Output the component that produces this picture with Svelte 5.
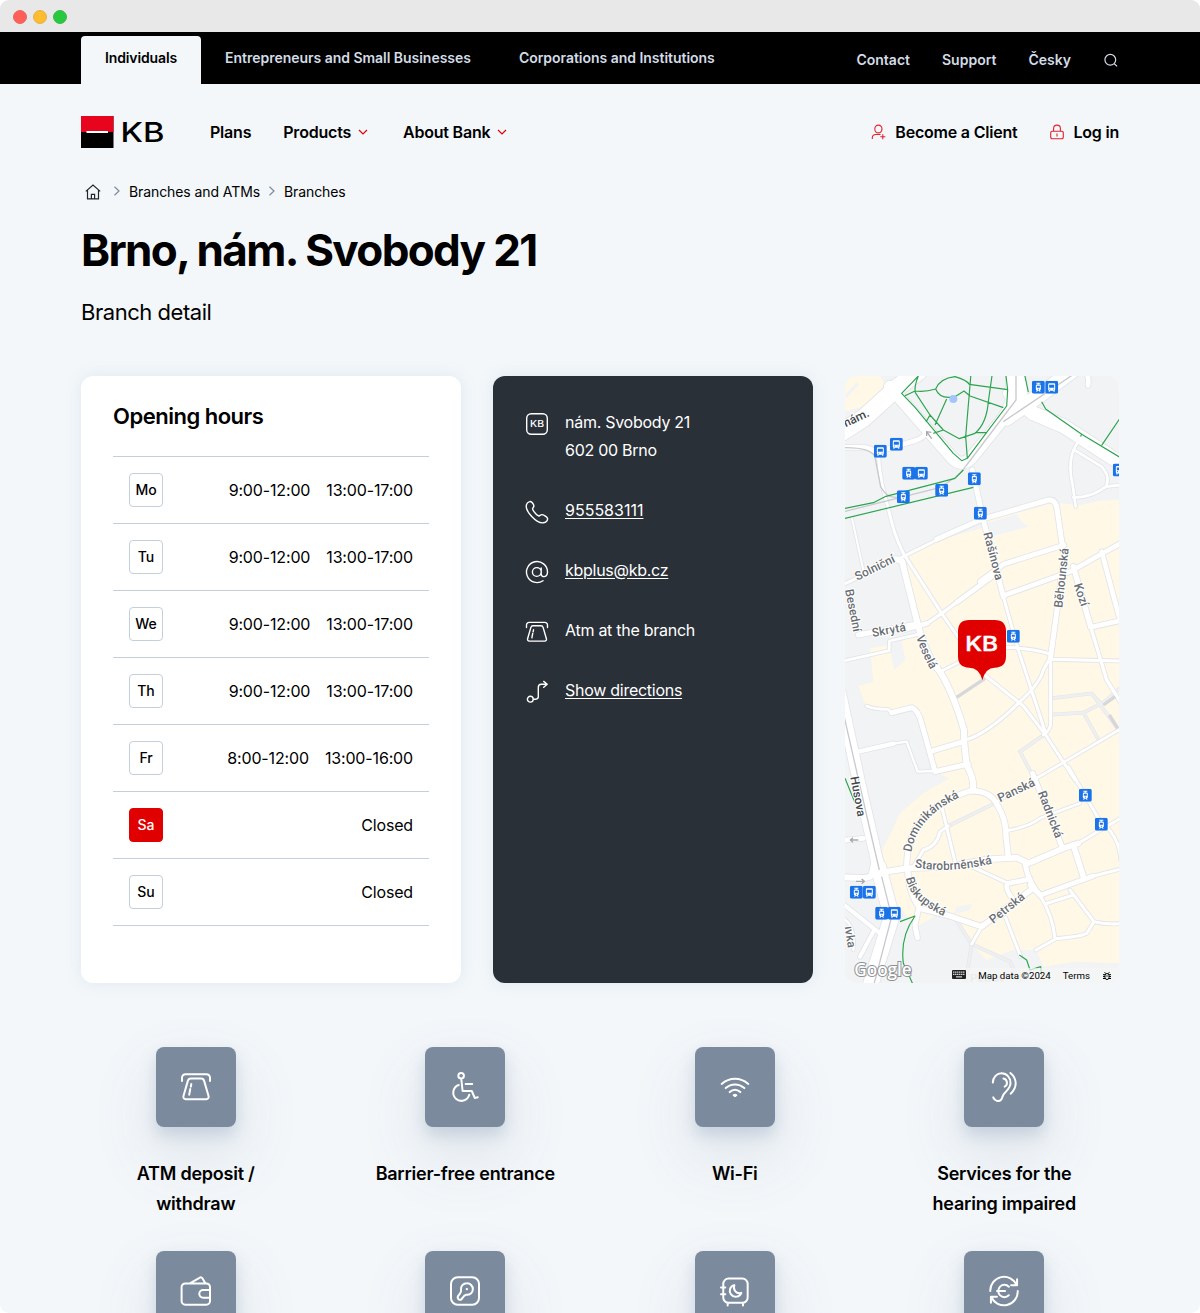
<script>
  const audiences = ['Individuals', 'Entrepreneurs and Small Businesses', 'Corporations and Institutions'];
  const hours = [
    { day: 'Mo', slots: ['9:00-12:00', '13:00-17:00'] },
    { day: 'Tu', slots: ['9:00-12:00', '13:00-17:00'] },
    { day: 'We', slots: ['9:00-12:00', '13:00-17:00'] },
    { day: 'Th', slots: ['9:00-12:00', '13:00-17:00'] },
    { day: 'Fr', slots: ['8:00-12:00', '13:00-16:00'] },
    { day: 'Sa', slots: ['Closed'], today: true },
    { day: 'Su', slots: ['Closed'] }
  ];
  const services = [
    { icon: 'atm', label: 'ATM deposit / withdraw' },
    { icon: 'wheelchair', label: 'Barrier-free entrance' },
    { icon: 'wifi', label: 'Wi-Fi' },
    { icon: 'ear', label: 'Services for the hearing impaired' },
    { icon: 'wallet', label: 'Cash desk' },
    { icon: 'key', label: 'Safe deposit boxes' },
    { icon: 'vault', label: 'Night safe' },
    { icon: 'euro', label: 'Exchange office' }
  ];

  // Line icons on a 24-unit grid
  const icons = {
    phone: 'M4.6 1.6c1.5-.6 2.9 1 4 3.2.8 1.7-.2 2.6-.8 3.3-.7.8-.1 1.8 1.2 3.600s3.500 4 4.800 4.300c1.300.2 1.600-1.400 3-1.400 1.600 0 5 2.100 5.600 3.500.8 2.200-1.400 4.400-4.200 4.700-3.300.3-8-2.600-11.700-6.600C2.700 12.200.8 7.600 1.400 4.800c.3-1.600 1.500-2.700 3.200-3.200z',
    at: 'M16.200 8v6c0 4 6.300 3.500 6.300-2A10.500 10.500 0 1 0 18 20.700M16.200 12a4.400 4.400 0 1 1-8.800 0 4.400 4.400 0 0 1 8.800 0z',
    atm: 'M1.500 7.500V5A2.600 2.600 0 0 1 4.100 2.400h15.800A2.600 2.600 0 0 1 22.500 5v2.500M8 5.700h8c1.200 0 1.800.6 2.100 1.700l3.300 11.300c.4 1.400-.4 2.400-1.700 2.400H4.300c-1.300 0-2.100-1-1.700-2.400L5.900 7.400C6.200 6.300 6.800 5.700 8 5.700zM8.500 9.800l-.4 2M7.700 13.500l-.8 4.300',
    route: 'M8.200 19.200a2.900 2.900 0 1 1-5.800 0 2.900 2.900 0 0 1 5.800 0zM8.200 19.200h2.500c1.700 0 2.600-1 2.600-2.600V7.400c0-2 1-3.100 3-3.100h5.900M18.700 1.400l3.500 2.900-3.500 2.900',
    wheelchair: 'M11.200 3.600a2.100 2.100 0 1 1-4.200 0 2.100 2.100 0 0 1 4.200 0zM9.200 5.800l1 9.200h6.900l2.200 5.200 2.300-.5M12.500 9.800h4.900M7.300 10.500a6.100 6.100 0 1 0 7.900 7.300',
    wifi: 'M2 9.700c5.900-5.300 14.100-5.300 20 0M5 12.800c4.200-3.600 9.800-3.600 14 0M8 15.800c2.500-2.200 5.500-2.200 8 0M11 18.200c.6-.5 1.400-.5 2 0l-1 .6z',
    ear: 'M3.600 8.700C3.800 4.600 6.600 1.700 10.200 1.700c3.900 0 6.700 3.400 6.700 7.300 0 3.800-2.900 5.600-5.100 8.300-.9 1.200-.9 3-2 4.300-1.600 1.700-4.900 1-5.900-1.800M11.600 5.700c3.200.7 3.400 4.900.9 6M16.800 1.500c5.300 4.400 5.200 11 .2 15.500',
    wallet: 'M4 6.300h15.800a2.700 2.700 0 0 1 2.700 2.700v10.500a2.800 2.800 0 0 1-2.800 2.800H4a2.800 2.800 0 0 1-2.800-2.800V9A2.700 2.700 0 0 1 4 6.300zM7.400 6.200l7.200-4.100c1-.6 1.700-.4 2.300.6l2.100 3.500M22.500 11.300h-5.200a2.850 2.850 0 0 0 0 5.700h5.200',
    key: 'M6.500 1.700h11a5 5 0 0 1 5 5v10.600a5 5 0 0 1-5 5h-11a5 5 0 0 1-5-5V6.700a5 5 0 0 1 5-5zM9 11.300C8.600 8.300 10.700 6.200 13.400 6.200a4.400 4.400 0 0 1 4.500 4.500c0 2.500-2.300 4.500-5 4.100-1.300.2-1.900 1-2.500 2l-.9 1.300c-1.600 1.300-3.700-.5-2.700-2.300l1.500-2c.6-.7.8-1.500.7-2.500zM13.300 10.500h.2v.2h-.2z',
    vault: 'M7.200 2.700h10.300a4 4 0 0 1 4 4v10.200a4 4 0 0 1-4 4H7.200a4 4 0 0 1-4-4V6.700a4 4 0 0 1 4-4zM1.500 9.300h3.200M1.500 14.500h3.200M6.500 21v1.900M18 21v1.900M11.500 7.600c-1.300 3.600 1.600 6.900 5.200 5.800-1.100 3.200-5.700 3.900-7.700 1.200-1.900-2.600-.8-6.200 2.500-7z',
    euro: 'M1.700 12A10.300 10.300 0 0 1 21.500 7.700M22.300 12A10.300 10.300 0 0 1 2.500 16.400M21.800 3.200v4.500h-4.500M2.200 20.900v-4.500h4.500M15.600 8.800a4.600 4.600 0 1 0 0 6.400M6.800 12h6'
  };

  const contacts = [
    { icon: 'kb', text: ['nám. Svobody 21', '602 00 Brno'] },
    { icon: 'phone', text: ['955583111'], link: true, digits: true },
    { icon: 'at', text: ['kbplus@kb.cz'], link: true },
    { icon: 'atm', text: ['Atm at the branch'] },
    { icon: 'route', text: ['Show directions'], link: true }
  ];

  // Streets of the map, in map units (three per pixel): [width, path]
  const streets = [
    [52, 'M0 190L70 145L175 50L235 5'],
    [36, 'M150 50L335 262Q362 292 392 266L490 145Q515 105 516 80V0'],
    [44, 'M500 145L600 75L700 0'],
    [42, 'M510 70L580 130L670 168L850 285'],
    [14, 'M738 10Q748 20 744 46'],
    [30, 'M540 10L550 100'],
    [8, 'M710 222Q680 270 698 345L707 410M703 240L785 290Q812 320 798 350Q750 385 700 382M798 350L840 345'],
    [14, 'M0 232H60Q90 232 100 242M140 237L225 212Q250 205 262 185'],
    [9, 'M115 250Q120 340 145 415Q160 490 190 550L305 730L360 810'],
    [6, 'M36 445L72 610'],
    [9, 'M0 648L190 560L290 510'],
    [15, 'M290 508L425 448L625 390Q645 388 650 410L672 560L655 690L632 860'],
    [9, 'M632 860V1060Q632 1080 610 1095'],
    [15, 'M397 300L430 450L490 680'],
    [9, 'M490 680L535 840L617 1090'],
    [14, 'M420 635L490 583L672 525'],
    [14, 'M490 677L690 605L850 515'],
    [16, 'M700 590L752 770'],
    [10, 'M752 770Q785 880 800 930L850 1010'],
    [14, 'M785 545L837 740M752 772L840 752'],
    [14, 'M350 697L460 617M262 760L190 780'],
    [10, 'M262 760L305 730L350 697'],
    [18, 'M165 568Q190 568 190 590L235 770Q260 860 300 905Q340 970 372 1080V1110L380 1185Q405 1230 398 1262'],
    [15, 'M55 795L230 762'],
    [8, 'M0 875L148 842V813L235 793M305 903L360 875'],
    [9, 'M495 832Q580 835 630 852M632 868L850 873'],
    [9, 'M430 912L550 1008L617 1095L705 1230'],
    [9, 'M370 1112Q440 1095 540 995Q600 940 610 900L632 860'],
    [8, 'M80 1008Q100 1018 145 1018L155 1030'],
    [15, 'M155 1028L215 1013Q235 1020 245 1060L270 1150L285 1205L385 1182'],
    [15, 'M270 1145L370 1115'],
    [13, 'M45 1147L160 1121'],
    [7, 'M160 1121L200 1115L233 1205L280 1203'],
    [36, 'M0 970L60 1250L120 1510'],
    [46, 'M115 1490L155 1640L90 1850'],
    [14, 'M0 1412L70 1405'],
    [18, 'M0 1520Q90 1530 95 1515L105 1470'],
    [12, 'M0 1595L120 1690M60 1760L100 1685'],
    [7, 'M0 1640Q50 1660 40 1740'],
    [16, 'M200 1495Q200 1400 245 1350Q300 1290 390 1263Q450 1260 472 1305Q500 1350 498 1400L505 1460'],
    [17, 'M110 1510L200 1495L330 1490L440 1468L530 1463L565 1480L670 1435L715 1420'],
    [9, 'M715 1420Q780 1380 850 1340'],
    [15, 'M578 1210L668 1435'],
    [8, 'M850 1072L560 1242L470 1295M500 1382Q570 1370 600 1345L720 1300'],
    [9, 'M685 1190L775 1345Q840 1400 842 1470'],
    [17, 'M700 1425L730 1520'],
    [14, 'M600 1576L760 1518'],
    [9, 'M760 1518L850 1495M305 1310L345 1475M220 1490L250 1440Q290 1430 300 1385L325 1368M395 1490L505 1540'],
    [15, 'M555 1480Q565 1540 602 1577L570 1545'],
    [14, 'M570 1527L505 1540Q490 1550 520 1590'],
    [16, 'M203 1495Q205 1570 240 1615L330 1638L425 1670L575 1558'],
    [15, 'M235 1620L225 1665L232 1703'],
    [9, 'M600 1576Q640 1640 645 1708L588 1740M645 1706Q720 1700 740 1690L762 1655L690 1560M762 1655Q800 1665 850 1660M615 1602L700 1575M425 1670L395 1722M497 1643L542 1760']
  ];
  const passages = 'M632 985L755 970L785 1003L850 945M632 1034L730 1028L775 1108M755 970L835 1078M730 1028L825 980M615 1092L540 1145L580 1220M325 1368L470 1297M345 1645L395 1722L375 1850M395 1722L510 1775L545 1850';
  const rail = 'M528 10V90L380 285Q355 325 290 355L0 428M705 10L490 155M0 233Q95 230 105 262L122 350Q140 385 170 382M0 985L90 1380L118 1500M125 1520L155 1640L100 1850';
  const paths = 'M235 18L185 70L225 112L340 250L365 272L382 265L440 187L500 108L503 60L498 18M235 18Q222 50 226 68L270 135L310 180L358 206L405 190Q440 160 445 95L457 10M195 77L225 63Q255 67 287 57Q300 25 345 20Q380 30 388 43L503 59M287 57Q300 90 345 80L372 63L390 78L490 113M393 10L377 200L382 265M320 87L285 165M405 188H440M280 190L310 180M258 156L270 135M553 10L565 66M605 95L617 117L650 140L725 193L850 268M785 226L850 130M725 190L722 200M0 418L100 398L135 380L345 325L370 300M0 449L400 352M15 1225L45 1298M180 1655L225 1638Q180 1700 190 1780L222 1850M538 1755L560 1770L570 1800L602 1790L605 1815';

  const stops = [
    ['tram', 595, 52], ['bus', 635, 52], ['bus', 121, 244], ['bus', 169, 223], ['tram', 206, 310], ['bus', 244, 310],
    ['tram', 190, 380], ['tram', 305, 361], ['tram', 403, 326], ['tram', 421, 430], ['bus', 838, 300], ['tram', 520, 799],
    ['tram', 736, 1276], ['tram', 784, 1363], ['tram', 49, 1567], ['bus', 88, 1567], ['tram', 125, 1630], ['bus', 163, 1630]
  ];
  // Street names, each set along its own baseline
  const names = [
    ['nám.', 'M17 172L110 128', 'dark'],
    ['Rašínova', 'M430 490L490 720'],
    ['Solniční', 'M52 632L190 564'],
    ['Besední', 'M15 660L49 830'],
    ['Skrytá', 'M98 801L230 777'],
    ['Veselá', 'M229 800Q242 850 290 930'],
    ['Běhounská', 'M667 714L692 480'],
    ['Kozí', 'M701 645L735 745'],
    ['Husova', 'M31 1222L64 1400', 'dark'],
    ['Dominikánská', 'M214 1447Q230 1340 364 1280'],
    ['Panská', 'M480 1297L620 1230'],
    ['Radnická', 'M593 1268L665 1452'],
    ['Starobrněnská', 'M224 1492Q340 1515 500 1470'],
    ['Biskupská', 'M198 1525Q210 1600 340 1650'],
    ['Petrská', 'M460 1662L600 1550'],
    ['ıvka', 'M14 1670L30 1780']
  ];
</script>

{#snippet glyph(name)}
  <svg class="glyph" viewBox="0 0 24 24" aria-hidden="true">
    {#if name === 'kb'}
      <rect x="1.700" y="1.700" width="20.600" height="20.600" rx="4.500" />
      <text class="glyph-text" x="5" y="15" textLength="14" lengthAdjust="spacingAndGlyphs">KB</text>
    {:else}
      <path d={icons[name]} />
    {/if}
  </svg>
{/snippet}

{#snippet chevron()}
  <svg class="chevron" viewBox="0 0 10 10"><path d="M1 3l4 4 4-4" /></svg>
{/snippet}

{#snippet crumb()}
  <svg class="crumb-sep" viewBox="0 0 8 10"><path d="M1.500 .8L6 5l-4.500 4.200" /></svg>
{/snippet}

<div class="window">
  <div class="titlebar"><i class="dot red"></i><i class="dot yellow"></i><i class="dot green"></i></div>

  <div class="topbar">
    <nav class="audiences">
      {#each audiences as a, i}
        <a class:active={i === 0}>{a}</a>
      {/each}
    </nav>
    <nav class="utility">
      <a>Contact</a><a>Support</a><a>Česky</a>
      <svg class="search" viewBox="0 0 16 16"><circle cx="7.300" cy="7.800" r="5.400" /><path d="M11.300 11.800l2.800 2.600" /></svg>
    </nav>
  </div>

  <header class="header">
    <svg class="logo" viewBox="0 0 84 32">
      <rect width="32.500" height="32" fill="#000" /><rect width="32.500" height="16" fill="#e9041e" />
      <rect x="5.500" y="15" width="21.500" height="2" fill="#fff" />
      <text class="logo-text" x="39.500" y="26" textLength="44" lengthAdjust="spacingAndGlyphs">KB</text>
    </svg>
    <nav class="menu">
      <a>Plans</a>
      <a>Products {@render chevron()}</a>
      <a>About Bank {@render chevron()}</a>
    </nav>
    <nav class="account">
      <a>
        <svg class="red-icon" viewBox="0 0 16 16"><path d="M11 5A3.600 3.900 0 1 1 3.800 5 3.600 3.900 0 0 1 11 5zM1.300 15v-1.200c0-2.200 1.600-3.300 3.700-3.300M5 10.500h4.500M11.800 10.300v5M9.300 12.800h5" /></svg>
        Become a Client
      </a>
      <a>
        <svg class="red-icon" viewBox="0 0 16 16"><path d="M3.200 7.300h9.600a1.500 1.500 0 0 1 1.500 1.500v4.400a1.500 1.500 0 0 1-1.500 1.500H3.200a1.500 1.500 0 0 1-1.500-1.500V8.800a1.500 1.500 0 0 1 1.500-1.500zM4.600 7V4.500a3.400 3.400 0 0 1 6.800 0V7M8 9.500v3" /></svg>
        Log in
      </a>
    </nav>
  </header>

  <nav class="breadcrumbs">
    <svg class="home" viewBox="0 0 16 16"><path d="M.8 7.400L8 1l7.200 6.400M2.500 6v8.800h11V6M6.400 14.600v-4.300h3.200v4.300" /></svg>
    {@render crumb()}<a>Branches and ATMs</a>
    {@render crumb()}<a>Branches</a>
  </nav>

  <h1>Brno, nám. Svobody 21</h1>
  <p class="subtitle">Branch detail</p>

  <main class="cards">
    <section class="hours">
      <h2>Opening hours</h2>
      <ul>
        {#each hours as h}
          <li>
            <b class="day" class:today={h.today}>{h.day}</b>
            <span class="slots">{#each h.slots as s}<span>{s}</span>{/each}</span>
          </li>
        {/each}
      </ul>
    </section>

    <section class="contact">
      {#each contacts as c}
        <div class="contact-row">
          {@render glyph(c.icon)}
          <div class="contact-text" class:link={c.link} class:digits={c.digits}>
            {#each c.text as line}<div><span>{line}</span></div>{/each}
          </div>
        </div>
      {/each}
    </section>

    <section class="map">
      <svg class="map-art" viewBox="15 18 822 1821">
        <defs>
          <symbol id="tram" viewBox="0 0 13 13">
            <rect width="13" height="13" rx="2" fill="#1a73e8" />
            <path d="M4.500 2h4v.9H7l-.3.800h.8c1 0 1.500.5 1.500 1.400v3.400c0 .7-.4 1.100-1 1.200l.8 1.300H7.700L7.200 10H5.800l-.5 1H4.200L5 9.700c-.6-.1-1-.5-1-1.200V5.100c0-.9.5-1.400 1.500-1.400h.3l.3-.8H4.500zM5 5v2h3V5zM6 8v.8h1V8z" fill="#fff" fill-rule="evenodd" />
          </symbol>
          <symbol id="bus" viewBox="0 0 13 13">
            <rect width="13" height="13" rx="2" fill="#1a73e8" />
            <path d="M4.500 2.500h4c1 0 1.500.5 1.500 1.400v5l-.5.600V11H8.300v-1H4.700v1H3.500V9.500L3 8.900v-5c0-.9.5-1.400 1.500-1.400zM4 4v2.800h5V4zM4.200 7.800v.9h1v-.9zM7.800 7.800v.9h1v-.9z" fill="#fff" fill-rule="evenodd" />
          </symbol>
        </defs>
        <path class="quarter" d="M0 0H110L140 55L100 100L0 130zM450 480L440 450L530 430L640 398L720 405L780 392L850 388V1780L705 1775L610 1790L590 1740H520L440 1770L395 1722L345 1645L300 1630L230 1670L150 1580L125 1440L150 1395L180 1330L250 1270L328 1225L285 1205L240 1040L215 1012L150 1030L75 1000L55 948L100 935L90 835L148 825L163 900L196 870L185 815L232 790L195 640L205 560L290 512L440 470z" />
        <path class="block" d="M15 75L50 35L55 45L20 85zM530 432L545 455L565 470L460 498L440 460zM350 1610L395 1602L390 1620L340 1632z" />
        <path class="passage-edge" d={passages} /><path class="passage" d={passages} />
        {#each streets as [w, d]}<path class="street-edge" {d} stroke-width={w + 5} />{/each}
        {#each streets as [w, d]}<path class="street" {d} stroke-width={w} />{/each}
        <path class="closed" d="M350 982L435 925M790 1005L825 980M808 1035L833 1075" />
        <path class="rail" d={rail} />
        <path class="path" d={paths} />
        <circle cx="340" cy="87" r="12" fill="#a2c5fb" />
        <path class="oneway" d="M275 206L262 188M260 198V185L274 187M55 1410H32M39 1403l-8 7 8 7M48 1534H72M65 1527l8 7-8 7" />
        <text class="district" x="390" y="1835">Petrov</text>
        {#each names as [label, d, tone], i}
          <path id={'way' + i} {d} fill="none" />
          <text class="street-name" class:dark={tone}><textPath href={'#way' + i}>{label}</textPath></text>
        {/each}
        {#each stops as [kind, x, y]}
          <use href={'#' + kind} x={x - 19.500} y={y - 19.500} width="39" height="39" />
        {/each}
        <path d="M388 750H464Q498 750 498 784V859Q498 893 464 893Q437 893 427 930Q417 893 388 893Q354 893 354 859V784Q354 750 388 750z" fill="#e10000" />
        <text class="pin-text" x="376" y="844" textLength="98" lengthAdjust="spacingAndGlyphs">KB</text>
        <text class="google" x="43" y="1817" textLength="172" lengthAdjust="spacingAndGlyphs">Google</text>
      </svg>
      <div class="attribution">
        <svg class="keyboard" viewBox="0 0 14 9"><rect width="14" height="9" rx="1" fill="#222" /><path d="M1.200 2.200h12M1.200 4.400h12" stroke="#fff" stroke-width="1.200" stroke-dasharray="1.200 .8" /><path d="M4 6.900h6" stroke="#fff" /></svg>
        <span>Map data ©2024</span><span>Terms</span>
        <svg class="bug" viewBox="0 0 10 10"><rect x="3" y="2.500" width="4" height="6" rx="2" /><path d="M3.500 2.500L2.700 1.200M6.500 2.500l.8-1.300M1 3.700h2M7 3.700h2M1 5.600h2M7 5.600h2M1 7.500h2M7 7.500h2M4.300 5h1.400" /></svg>
      </div>
    </section>
  </main>

  <section class="services">
    {#each services as s}
      <div class="service">
        <div class="tile">{@render glyph(s.icon)}</div>
        <h3>{s.label}</h3>
      </div>
    {/each}
  </section>
</div>

<style>
  :global(body) { background: #fff; }
  * { box-sizing: border-box; }
  .window { height: 1313px; overflow: hidden; border-radius: 9px; background: #f3f7fa; color: #000; font-family: Inter, sans-serif; }
  h1, h2, h3, p, ul { margin: 0; padding: 0; }
  svg { display: block; flex: none; fill: none; }

  .titlebar { height: 32px; padding: 2px 13px 0; display: flex; align-items: center; gap: 6px; background: #e8e8e8; }
  .dot { width: 14px; height: 14px; border-radius: 50%; border: 1px solid; }
  .red { background: #ff5f57; border-color: #e9675f; }
  .yellow { background: #febc2e; border-color: #e5b04b; }
  .green { background: #28c840; border-color: #3bb94c; }

  .topbar { height: 52px; padding: 4px 81px 0; display: flex; justify-content: space-between; background: #000; font-size: 14px; font-weight: 600; color: #d3dce6; }
  .audiences { display: flex; }
  .audiences a { height: 48px; padding: 0 24px; line-height: 44px; letter-spacing: -0.030px; }
  .audiences .active { background: #f3f7fa; color: #000; border-radius: 4px 4px 0 0; letter-spacing: -0.120px; }
  .utility { display: flex; align-items: center; gap: 32px; padding-bottom: 1px; }
  .search { width: 16px; height: 16px; stroke: #d3dce6; stroke-width: 1.200; }

  .header { margin-top: 32px; height: 32px; padding: 0 81px; display: flex; align-items: center; font-size: 16px; font-weight: 600; letter-spacing: -0.210px; }
  .logo { width: 84px; height: 32px; letter-spacing: 0; }
  .logo-text { font: 500 27.500px Inter, sans-serif; fill: #000; }
  .menu, .account { display: flex; }
  .menu { gap: 32px; margin-left: 45px; }
  .menu a, .account a { display: flex; align-items: center; gap: 7px; }
  .chevron { width: 10px; height: 10px; margin-right: 3px; stroke: #e10000; stroke-width: 1.200; }
  .account { gap: 32px; margin-left: auto; }
  .account a { gap: 8px; }
  .red-icon { width: 16px; height: 16px; stroke: #e4202a; stroke-width: 1.100; }

  .breadcrumbs { height: 24px; margin-top: 31px; padding: 0 85px; display: flex; align-items: center; font-size: 14px; letter-spacing: -0.090px; }
  .home { width: 16px; height: 16px; margin-top: 1px; stroke: #20262d; stroke-width: 1.200; }
  .crumb-sep { width: 8px; height: 10px; margin: 0 8px; stroke: #7b8a9d; stroke-width: 1.200; }
  .home + .crumb-sep { margin-left: 12px; }

  h1 { padding: 0 81px; height: 56px; margin-top: 19px; font-size: 44px; line-height: 56px; font-weight: 700; letter-spacing: -1.650px; }
  .subtitle { padding: 0 81px; margin-top: 18px; height: 32px; font-size: 22px; line-height: 32px; letter-spacing: -0.460px; }

  .cards { margin-top: 48px; height: 607px; padding: 0 81px; display: flex; gap: 32px; }
  .hours { width: 380px; padding: 24px 32px; border-radius: 12px; background: #fff; box-shadow: 0 0 16px rgba(120, 150, 180, 0.150); }
  h2 { font-size: 22px; line-height: 32px; font-weight: 600; letter-spacing: -0.490px; }
  ul { list-style: none; margin-top: 24px; border-top: 1px solid #c3cfdb; }
  li { height: 67px; padding: 0 16px; display: flex; align-items: center; justify-content: space-between; border-bottom: 1px solid #c3cfdb; font-size: 16px; }
  .day { width: 34px; height: 34px; border: 1px solid #c3cfdb; border-radius: 4px; font-size: 14px; font-weight: 500; line-height: 32px; text-align: center; letter-spacing: -0.100px; }
  .today { background: #e10000; border-color: #e10000; color: #fff; }
  .slots { display: flex; gap: 16px; letter-spacing: -0.150px; }

  .contact { width: 320px; padding: 32px; border-radius: 12px; background: #2a3038; color: #fff; box-shadow: 0 0 16px rgba(120, 150, 180, 0.150); display: flex; flex-direction: column; gap: 32px; }
  .contact-row { display: flex; gap: 16px; font-size: 16px; line-height: 28px; letter-spacing: -0.270px; }
  .contact-row .glyph { margin-top: 4px; letter-spacing: 0; }
  .link { text-decoration: underline; text-underline-offset: 2px; }
  .digits { letter-spacing: 0; }
  .glyph { width: 24px; height: 24px; stroke: #fff; stroke-width: 1.400; stroke-linecap: round; stroke-linejoin: round; }
  .glyph-text { font: 500 8.500px Inter, sans-serif; fill: #fff; stroke: none; }

  .map { position: relative; width: 274px; border-radius: 12px; overflow: hidden; background: #f1f3f5; }
  .map-art { width: 274px; height: 607px; }
  .quarter { fill: #fff8e6; }
  .block { fill: #f1f3f5; }
  .street-edge { stroke: #e2e4e8; stroke-linecap: round; stroke-linejoin: round; }
  .street { stroke: #fff; stroke-linecap: round; stroke-linejoin: round; }
  .passage-edge { stroke: #e3e4e7; stroke-width: 11; }
  .passage { stroke: #eeeff1; stroke-width: 8; }
  .closed { stroke: #d6d7da; stroke-width: 10; }
  .rail { stroke: #c9cacd; stroke-width: 4; }
  .path { stroke: #2ca44f; stroke-width: 3.500; stroke-linejoin: round; }
  .oneway { stroke: #a7a9ad; stroke-width: 4; }
  .street-name { font: 500 36px Roboto, sans-serif; fill: #6a6e73; stroke: #fff; stroke-width: 6; paint-order: stroke; }
  .dark { fill: #43484d; }
  .district { font: 500 34px Roboto, sans-serif; fill: #d0d2d5; letter-spacing: 1px; }
  .pin-text { font: 500 62px Inter, sans-serif; fill: #fff; stroke: #fff; stroke-width: 1.500; }
  .google { font: 600 53px "Open Sans", sans-serif; fill: #fff; stroke: #8d9094; stroke-width: 6; paint-order: stroke; }
  .attribution { position: absolute; right: 0; bottom: 0; height: 15px; padding: 0 7px 0 0; display: flex; align-items: center; gap: 12px; background: rgba(245, 245, 245, 0.700); font: 9.700px Roboto, sans-serif; color: #000; }
  .keyboard { width: 14px; height: 9px; margin-top: -2px; }
  .bug { width: 10px; height: 10px; stroke: #000; stroke-width: 1; }

  .services { margin-top: 64px; padding: 0 81px; display: grid; grid-template-columns: repeat(4, 1fr); column-gap: 40px; grid-auto-rows: 204px; }
  .service { padding: 0 16px; display: flex; flex-direction: column; align-items: center; }
  .tile { width: 80px; height: 80px; border-radius: 8px; background: #7b8a9d; display: grid; place-items: center; box-shadow: 0 8px 16px rgba(123, 145, 175, 0.300), 0 28px 64px rgba(100, 115, 135, 0.150); }
  .tile .glyph { width: 32px; height: 32px; stroke-width: 1.500; }
  h3 { margin-top: 32px; font-size: 18px; line-height: 30px; font-weight: 600; text-align: center; letter-spacing: -0.230px; }
</style>
